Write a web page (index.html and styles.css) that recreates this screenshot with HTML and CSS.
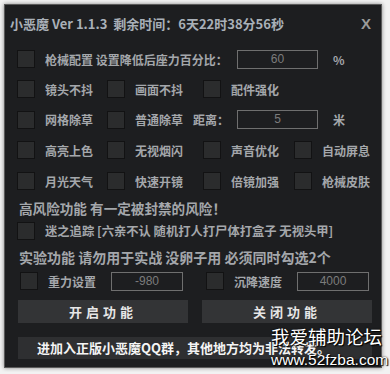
FILE: index.html
```html
<!DOCTYPE html>
<html lang="zh-CN">
<head>
    <meta charset="UTF-8">
    <meta name="viewport" content="width=device-width, initial-scale=1.0">
    <title>小恶魔</title>
    <link rel="stylesheet" href="styles.css">
</head>
<body>
    <div class="window">
        <div class="title-bar">
            <span class="title">小恶魔 Ver 1.1.3&nbsp; 剩余时间：6天22时38分56秒</span>
            <span class="close">X</span>
        </div>

        <div class="row r1 line">
            <span class="box"></span>
            <span class="label wide">枪械配置 设置降低后座力百分比：</span>
            <span class="field">60</span>
            <span class="unit">%</span>
        </div>

        <div class="row r2 grid">
            <div class="opt"><span class="box"></span><span class="label">镜头不抖</span></div>
            <div class="opt"><span class="box"></span><span class="label">画面不抖</span></div>
            <div class="opt"><span class="box"></span><span class="label">配件强化</span></div>
        </div>

        <div class="row r3 line">
            <div class="opt c1"><span class="box"></span><span class="label">网格除草</span></div>
            <div class="opt c2"><span class="box"></span><span class="label">普通除草</span></div>
            <span class="label dist">距离：</span>
            <span class="field">5</span>
            <span class="unit">米</span>
        </div>

        <div class="row r4 grid">
            <div class="opt"><span class="box"></span><span class="label">高亮上色</span></div>
            <div class="opt"><span class="box"></span><span class="label">无视烟闪</span></div>
            <div class="opt"><span class="box"></span><span class="label">声音优化</span></div>
            <div class="opt"><span class="box"></span><span class="label">自动屏息</span></div>
        </div>

        <div class="row r5 grid">
            <div class="opt"><span class="box"></span><span class="label">月光天气</span></div>
            <div class="opt"><span class="box"></span><span class="label">快速开镜</span></div>
            <div class="opt"><span class="box"></span><span class="label">倍镜加强</span></div>
            <div class="opt"><span class="box"></span><span class="label">枪械皮肤</span></div>
        </div>

        <div class="heading h1">高风险功能 有一定被封禁的风险！</div>

        <div class="row r6 line">
            <span class="box"></span>
            <span class="label">迷之追踪 [六亲不认 随机打人打尸体打盒子 无视头甲]</span>
        </div>

        <div class="heading h2">实验功能 请勿用于实战 没卵子用 必须同时勾选2个</div>

        <div class="row r7 line">
            <div class="exp">
                <span class="box"></span>
                <span class="label">重力设置</span>
                <span class="field small">-980</span>
            </div>
            <div class="exp">
                <span class="box"></span>
                <span class="label">沉降速度</span>
                <span class="field small">4000</span>
            </div>
        </div>

        <div class="buttons">
            <div class="btn">开启功能</div>
            <div class="btn">关闭功能</div>
        </div>

        <div class="notice">进加入正版小恶魔QQ群，其他地方均为非法转发。</div>
    </div>

    <!-- forum watermark stamped over the screenshot -->
    <div class="watermark">
        <div class="wm-name">我爱辅助论坛</div>
        <div class="wm-url">www.52fzba.com</div>
    </div>
</body>
</html>
```

FILE: styles.css
```css
body {
    margin: 0;
    padding: 4px;
    background-color: #f2f2f2;
    font-family: "Noto Sans CJK SC", "Noto Sans", sans-serif;
    font-weight: bold;
    font-size: 12px;
    color: #a4a7ab;
}
.window {
    position: relative;
    width: 376px;
    height: 362px;
    background-color: #1d1e20;
    border: 1px solid #5a5a5a;
    box-shadow: 0 0 4px rgba(0, 0, 0, 0.45);
}
.title-bar {
    height: 39px;
    display: flex;
    align-items: center;
    padding: 0 0 3px 5px;
    box-sizing: border-box;
}
.title {
    font-size: 13px;
    color: #a9b0b8;
    white-space: pre;
}
.close {
    margin-left: auto;
    margin-right: 10px;
    font-family: "Liberation Sans", sans-serif;
    font-size: 15px;
    color: #9a9a9a;
}
.row {
    padding-left: 12px;
    align-items: center;
}
.line {
    display: flex;
}
.grid {
    display: grid;
    grid-template-columns: 90px 96px 91px auto;
}
.r1 { height: 30px; }
.r2 { height: 30px; }
.r3 { height: 31px; }
.r4 { height: 30px; }
.r5 { height: 32px; }
.r6 { height: 24px; }
.r7 { height: 22px; padding-left: 15px; }
.opt {
    display: flex;
    align-items: center;
}
.box {
    flex: none;
    width: 16px;
    height: 16px;
    margin-right: 10px;
    background-color: #2b2c2d;
    border: 1px solid #121213;
}
.label {
    white-space: nowrap;
}
.r6 .label {
    font-size: 12.3px;
}
.wide {
    width: 192px;
}
.c1 { width: 90px; }
.c2 { width: 86px; }
.dist { width: 44px; }
.field {
    width: 79px;
    height: 17px;
    border: 1px solid #6f6f6f;
    color: #7c7c7c;
    font-weight: normal;
    text-align: center;
    line-height: 17px;
    font-family: "Liberation Sans", sans-serif;
    font-size: 12px;
}
.unit {
    margin-left: 15px;
}
.heading {
    padding-left: 14px;
    display: flex;
    align-items: center;
    font-size: 13.6px;
}
.h1 { height: 22px; }
.h2 { height: 27px; font-size: 14px; }
.exp {
    display: flex;
    align-items: center;
}
.exp .label {
    width: 63px;
}
.field.small {
    width: 70px;
    margin-right: 23px;
}
.buttons {
    display: flex;
    gap: 14px;
    margin-top: 8px;
    padding-left: 13px;
}
.btn {
    width: 170px;
    height: 23px;
    background-color: #333436;
    color: #e6e6e6;
    font-size: 13px;
    letter-spacing: 4px;
    text-align: center;
    line-height: 23px;
}
.notice {
    margin: 14px 0 0 13px;
    width: 335px;
    height: 22px;
    padding-left: 19px;
    background-color: #2e2f31;
    color: #f4f4f4;
    font-size: 13px;
    line-height: 22px;
    white-space: nowrap;
    overflow: hidden;
}
.watermark {
    position: absolute;
    left: 271px;
    top: 327px;
    color: #ffffff;
    text-shadow: 0 0 2px #000, 1px 1px 1px #000;
    line-height: 1;
}
.wm-name {
    font-size: 18.5px;
    font-weight: normal;
}
.wm-url {
    margin-top: 6px;
    font-family: "Liberation Sans", sans-serif;
    font-size: 15.5px;
    font-weight: normal;
}
```
